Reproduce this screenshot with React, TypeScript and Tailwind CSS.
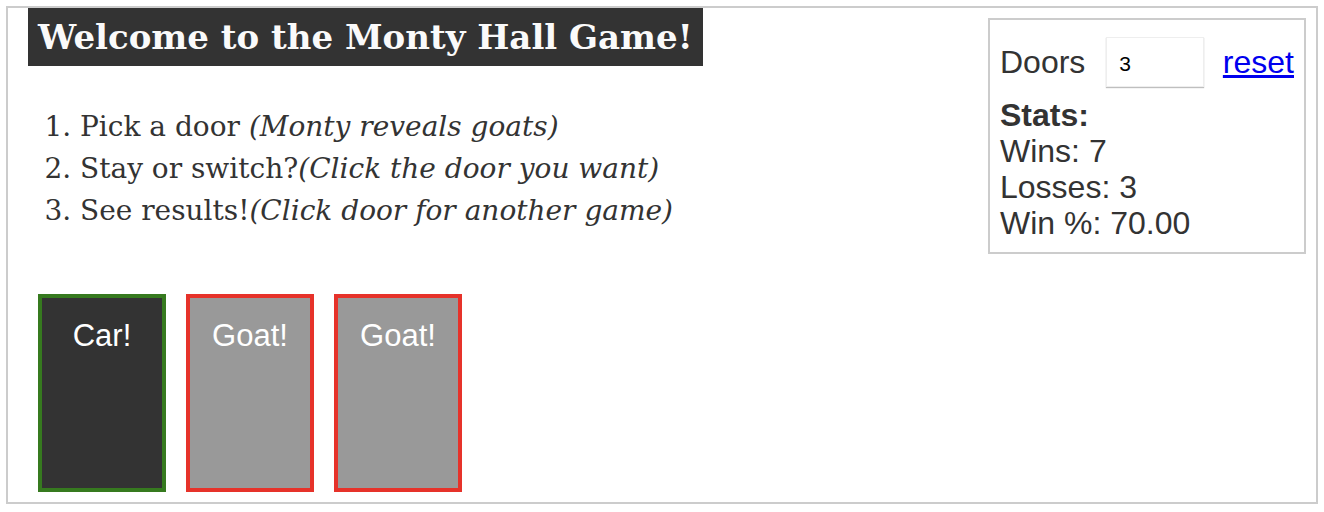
import { useState } from 'react'

const doors = [
  { label: 'Car!', bg: 'bg-[#333333]', border: 'border-[#367a1f]' },
  { label: 'Goat!', bg: 'bg-[#999999]', border: 'border-[#e6322a]' },
  { label: 'Goat!', bg: 'bg-[#999999]', border: 'border-[#e6322a]' },
]

export default function App() {
  const [count, setCount] = useState('3')

  return (
    <div className="bg-white w-[1324px] h-[512px] p-[6px]">
      <div className="border-2 border-[#cccccc] h-[498px] flex justify-between">
        {/* game */}
        <div className="pl-[20px]">
          <h1 className="inline-block bg-[#333333] text-[#fafafa] font-bold text-[34px] leading-[58px] h-[58px] px-[10px] font-['DejaVu_Serif',serif]">
            Welcome to the Monty Hall Game!
          </h1>
          <ol className="list-decimal pl-[52px] mt-[40px] text-[#333333] text-[28px] leading-[42px] font-['DejaVu_Serif',serif]">
            <li>Pick a door <i>(Monty reveals goats)</i></li>
            <li>Stay or switch?<i>(Click the door you want)</i></li>
            <li>See results!<i>(Click door for another game)</i></li>
          </ol>
          <div className="flex gap-[20px] mt-[62px] pl-[10px]">
            {doors.map((d, i) => (
              <div key={i} className={`w-[128px] h-[198px] border-4 ${d.bg} ${d.border} text-white text-center pt-[15px] text-[31px] font-['Liberation_Sans',Arial,sans-serif]`}>
                {d.label}
              </div>
            ))}
          </div>
        </div>

        {/* stats */}
        <div className="mt-[10px] mr-[10px] w-[318px] h-[236px] border-2 border-[#cccccc] px-[10px] pt-[17px] text-[#333333] text-[32px] leading-[36px] font-['Liberation_Sans',Arial,sans-serif] self-start">
          <div className="flex items-center">
            <span>Doors</span>
            <input
              value={count}
              onChange={e => setCount(e.target.value)}
              className="ml-[21px] w-[98px] h-[50px] border border-[#eeeeee] shadow-[0_1px_1px_rgba(0,0,0,0.25)] pl-[12px] pt-[4px] text-[21px] leading-normal text-black outline-none font-['Liberation_Sans',Arial,sans-serif]"
            />
            <a href="#" className="ml-auto text-[#0000ee] underline">reset</a>
          </div>
          <div className="font-bold mt-[10px]">Stats:</div>
          <div>Wins: 7</div>
          <div>Losses: 3</div>
          <div>Win %: 70.00</div>
        </div>
      </div>
    </div>
  )
}
